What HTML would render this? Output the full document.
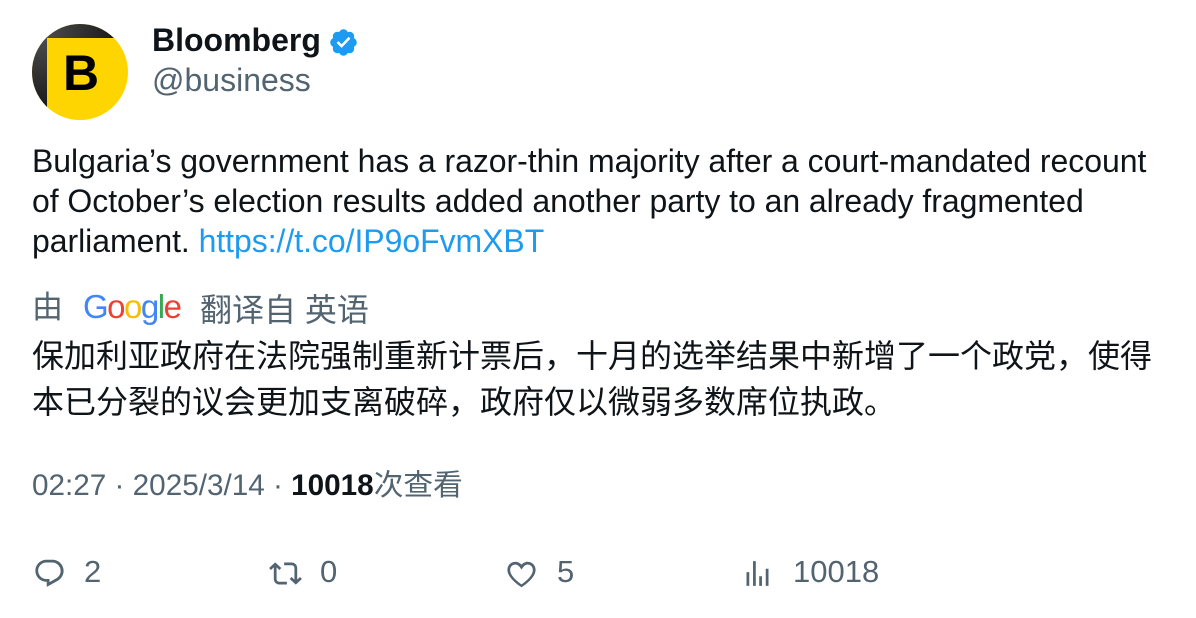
<!DOCTYPE html>
<html><head><meta charset="utf-8"><style>
*{margin:0;padding:0;box-sizing:border-box}
body{width:1196px;height:618px;background:#fff;font-family:"Liberation Sans","Noto Sans CJK SC",sans-serif;color:#0f1419;position:relative;overflow:hidden}
.a{position:absolute;white-space:nowrap}
.g{color:#536471}
</style></head><body>
<div class="a" style="left:32px;top:24px;width:96px;height:96px;border-radius:50%;overflow:hidden;background:#ffd500">
 <div style="position:absolute;left:0;top:0;width:96px;height:14px;background:linear-gradient(90deg,#555,#111)"></div>
 <div style="position:absolute;left:0;top:0;width:15px;height:96px;background:linear-gradient(180deg,#555,#111)"></div>
 <div style="position:absolute;left:31px;top:20px;font:bold 50px 'Liberation Sans';color:#000">B</div>
</div>
<div class="a" style="left:152px;top:22px;font-weight:bold;font-size:32px">Bloomberg</div>
<svg class="a" style="left:328px;top:27px" width="31" height="31" viewBox="0 0 24 24"><path fill="#1d9bf0" d="M22.25 12c0-1.430-.88-2.670-2.190-3.340.46-1.390.2-2.900-.81-3.910s-2.520-1.270-3.910-.81c-.66-1.310-1.910-2.190-3.340-2.190s-2.670.88-3.330 2.190c-1.400-.46-2.910-.2-3.920.81s-1.260 2.520-.8 3.910c-1.310.67-2.200 1.910-2.200 3.340s.89 2.670 2.200 3.340c-.46 1.390-.21 2.900.8 3.910s2.520 1.260 3.910.81c.67 1.310 1.910 2.190 3.340 2.190s2.680-.88 3.340-2.190c1.390.45 2.900.2 3.910-.81s1.270-2.520.81-3.910c1.310-.67 2.190-1.910 2.190-3.340z"/><path fill="#fff" d="M10.54 16.2l-3.9-3.9 1.4-1.4 2.5 2.5 5.4-5.8 1.45 1.360z"/></svg>
<div class="a g" style="left:152px;top:62px;font-size:32px">@business</div>
<div class="a" style="left:32px;top:141px;font-size:32px;line-height:40px;letter-spacing:-0.05px">Bulgaria’s government has a razor-thin majority after a court-mandated recount<br>of October’s election results added another party to an already fragmented<br>parliament. <span style="color:#1d9bf0">https://t.co/IP9oFvmXBT</span></div>
<div class="a g" style="left:32px;top:282px;font-size:31px">由</div>
<div class="a" style="left:83px;top:288px;font-size:33px;letter-spacing:-1.5px"><span style="color:#4285f4">G</span><span style="color:#ea4335">o</span><span style="color:#fbbc05">o</span><span style="color:#4285f4">g</span><span style="color:#34a853">l</span><span style="color:#ea4335">e</span></div>
<div class="a g" style="left:200px;top:285px;font-size:32px">翻译自 英语</div>
<div class="a" style="left:32px;top:333px;font-size:32px;line-height:46px">保加利亚政府在法院强制重新计票后，十月的选举结果中新增了一个政党，使得<br>本已分裂的议会更加支离破碎，政府仅以微弱多数席位执政。</div>
<div class="a g" style="left:32px;top:461px;font-size:29.7px">02:27 · 2025/3/14 · <b style="color:#0f1419">10018</b>次查看</div>
<svg class="a" style="left:33px;top:557px" width="33" height="33" viewBox="0 0 24 24" fill="#536471"><path d="M1.75 10c0-4.42 3.58-8 8-8h4.37c4.49 0 8.13 3.64 8.13 8.13 0 2.96-1.6 5.68-4.2 7.11L10 21.71v-3.71h-.25c-4.42 0-8-3.58-8-8zm8-6c-3.31 0-6 2.690-6 6s2.690 6 6 6h2.25v2.31l4.96-2.83c1.950-1.07 3.160-3.11 3.160-5.35 0-3.38-2.740-6.13-6.130-6.13H9.75z"/></svg>
<div class="a g" style="left:84px;top:554px;font-size:31px">2</div>
<svg class="a" style="left:269px;top:557px" width="33" height="33" viewBox="0 0 24 24" fill="#536471"><path d="M4.5 3.88l4.43 4.14-1.36 1.46L5.5 7.55V16c0 1.1.9 2 2 2H13v2H7.5c-2.21 0-4-1.79-4-4V7.55L1.43 9.48.07 8.02 4.5 3.88zM16.5 6H11V4h5.5c2.21 0 4 1.79 4 4v8.45l2.07-1.93 1.36 1.46-4.43 4.14-4.43-4.14 1.36-1.46 2.07 1.93V8c0-1.1-.89-2-2-2z"/></svg>
<div class="a g" style="left:320px;top:554px;font-size:31px">0</div>
<svg class="a" style="left:505px;top:557px" width="33" height="33" viewBox="0 0 24 24" fill="#536471"><path d="M16.7 5.5c-1.1-.01-2.41.49-3.49 1.94L12 9.07l-1.2-1.63C9.72 5.99 8.4 5.49 7.3 5.5c-1.86.03-3.55 1.58-3.55 3.840 0 2.430 1.670 4.820 3.870 6.980 1.600 1.560 3.340 2.850 4.380 3.560 1.040-.71 2.780-2 4.380-3.560 2.200-2.160 3.870-4.550 3.870-6.980 0-2.260-1.690-3.810-3.550-3.840zM12 22.020l-.57-.37c-.92-.58-3.010-2.030-5.010-3.990C4.190 15.480 1.750 12.570 1.750 9.340 1.750 6.060 4.240 3.550 7.260 3.500c1.710-.03 3.450.68 4.740 2.090 1.290-1.410 3.030-2.120 4.740-2.090 3.020.05 5.510 2.560 5.510 5.840 0 3.230-2.440 6.140-4.670 8.320-2 1.960-4.090 3.410-5.010 3.990l-.57.37z"/></svg>
<div class="a g" style="left:557px;top:554px;font-size:31px">5</div>
<svg class="a" style="left:741px;top:557px" width="33" height="33" viewBox="0 0 24 24" fill="#536471"><path d="M8.75 21V3h2v18h-2zM18 21V8.5h2V21h-2zM4 21l.004-10h2L6 21H4zm9.248 0v-7h2v7h-2z"/></svg>
<div class="a g" style="left:793px;top:554px;font-size:31px">10018</div>
</body></html>
